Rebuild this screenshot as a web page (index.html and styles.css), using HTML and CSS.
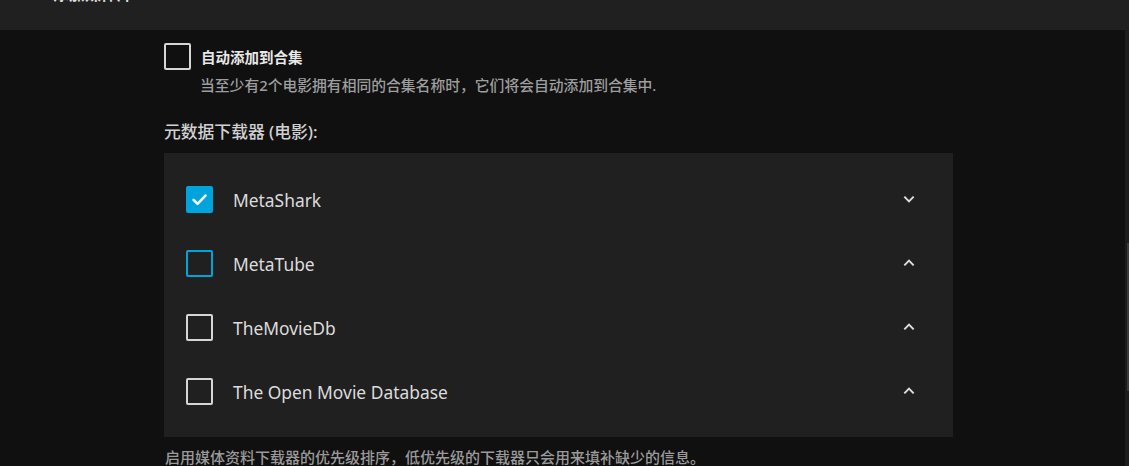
FILE: index.html
```html
<!DOCTYPE html>
<html lang="zh-CN">
<head>
    <meta charset="UTF-8">
    <meta name="viewport" content="width=device-width, initial-scale=1.0">
    <title>媒体库设置</title>
    <link rel="stylesheet" href="styles.css">
</head>
<body>
    <div class="dialog-header">
        <span class="header-back">
            <svg width="14" height="14" viewBox="0 0 24 24"><path d="M20 11H7.8l5.6-5.6L12 4l-8 8 8 8 1.4-1.4L7.8 13H20z" fill="#ddd"/></svg>
        </span>
        <span class="header-title">添加媒体库</span>
    </div>

    <div class="page">
        <div class="content">
            <label class="check-row">
                <span class="checkbox"></span>
                <span class="check-label">自动添加到合集</span>
            </label>
            <div class="field-desc">当至少有2个电影拥有相同的合集名称时，它们将会自动添加到合集中.</div>

            <h3 class="section-title">元数据下载器 (电影):</h3>

            <div class="paper-list">
                <div class="list-item">
                    <span class="checkbox checked">
                        <svg width="19" height="19" viewBox="0 0 24 24"><path d="M4.5 12.5l5 5L19.5 7" fill="none" stroke="#fff" stroke-width="3.2" stroke-linecap="round" stroke-linejoin="round"/></svg>
                    </span>
                    <span class="item-name">MetaShark</span>
                    <span class="item-btn">
                        <svg width="14" height="14" viewBox="0 0 24 24"><path d="M4 8l8 8 8-8" fill="none" stroke="#ddd" stroke-width="3.4"/></svg>
                    </span>
                </div>
                <div class="list-item">
                    <span class="checkbox focused"></span>
                    <span class="item-name">MetaTube</span>
                    <span class="item-btn">
                        <svg width="14" height="14" viewBox="0 0 24 24"><path d="M4 16l8-8 8 8" fill="none" stroke="#ddd" stroke-width="3.4"/></svg>
                    </span>
                </div>
                <div class="list-item">
                    <span class="checkbox"></span>
                    <span class="item-name">TheMovieDb</span>
                    <span class="item-btn">
                        <svg width="14" height="14" viewBox="0 0 24 24"><path d="M4 16l8-8 8 8" fill="none" stroke="#ddd" stroke-width="3.4"/></svg>
                    </span>
                </div>
                <div class="list-item">
                    <span class="checkbox"></span>
                    <span class="item-name">The Open Movie Database</span>
                    <span class="item-btn">
                        <svg width="14" height="14" viewBox="0 0 24 24"><path d="M4 16l8-8 8 8" fill="none" stroke="#ddd" stroke-width="3.4"/></svg>
                    </span>
                </div>
            </div>

            <div class="list-desc">启用媒体资料下载器的优先级排序，低优先级的下载器只会用来填补缺少的信息。</div>
        </div>

        <div class="scrollbar">
            <div class="scroll-thumb"></div>
        </div>
    </div>
</body>
</html>
```

FILE: styles.css
```css
body {
    margin: 0;
    background-color: #101010;
    color: #ddd;
    font-family: "Noto Sans", "Noto Sans CJK SC", sans-serif;
    height: 466px;
    overflow: hidden;
}

.dialog-header {
    height: 30px;
    background-color: #202020;
    display: flex;
    align-items: flex-end;
    gap: 24px;
    padding: 0 0 27px 15px;
    box-sizing: border-box;
}

.header-back {
    display: flex;
    margin-bottom: 1px;
}

.header-title {
    font-size: 16px;
    line-height: 20px;
    font-weight: bold;
    margin-bottom: -1px;
}

.page {
    display: flex;
    height: 436px;
}

.content {
    flex: 1;
    padding: 13px 0 0 164px;
}

.check-row {
    display: flex;
    align-items: center;
    gap: 10px;
}

.checkbox {
    width: 27px;
    height: 27px;
    box-sizing: border-box;
    border: 2px solid #d6d6d6;
    border-radius: 2px;
    display: flex;
    align-items: center;
    justify-content: center;
    flex-shrink: 0;
}

.checkbox.checked {
    background-color: #00a4dc;
    border-color: #00a4dc;
}

.checkbox.focused {
    border-color: #00a4dc;
}

.check-label {
    font-size: 14.5px;
    font-weight: bold;
    color: #e8e8e8;
}

.field-desc {
    margin: 5px 0 0 36px;
    font-size: 14.8px;
    line-height: 20px;
    font-weight: 500;
    color: #9e9e9e;
}

.section-title {
    margin: 26px 0 0;
    font-size: 16.8px;
    line-height: 22px;
    font-weight: 500;
    color: #d0d0d0;
}

.paper-list {
    width: 789px;
    margin-top: 10px;
    background-color: #202020;
    padding: 15px 0 13px;
}

.list-item {
    height: 64px;
    display: flex;
    align-items: center;
    padding: 0 32px 0 22px;
}

.list-item .checkbox {
    margin-top: -2px;
}

.item-name {
    flex: 1;
    margin-left: 20px;
    font-size: 17.4px;
    color: #dcdcdc;
}

.item-btn {
    display: flex;
    margin-top: -3px;
    width: 24px;
    justify-content: center;
}

.list-desc {
    margin: 9px 0 0 1px;
    font-size: 15px;
    font-weight: 500;
    color: #9a9a9a;
}

.scrollbar {
    width: 4px;
    background-color: #1d1d1d;
    padding-top: 213px;
}

.scroll-thumb {
    width: 2px;
    height: 148px;
    margin-left: 2px;
    background-color: #3a3a3a;
}
```
